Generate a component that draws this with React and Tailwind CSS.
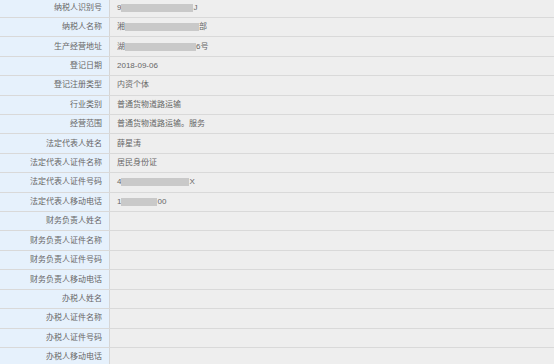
import React from 'react'

// masked value: leading text, grey block, trailing text
const Masked = ({ head, width, tail }) => (
  <span className="flex items-center">
    <span>{head}</span>
    <span className="inline-block h-[8px] bg-[#c9c9c9]" style={{ width }} />
    <span>{tail}</span>
  </span>
)

const rows = [
  { label: '纳税人识别号', value: <Masked head="9" width={72} tail="J" /> },
  { label: '纳税人名称', value: <Masked head="湘" width={74} tail="部" /> },
  { label: '生产经营地址', value: <Masked head="湖" width={71} tail="6号" /> },
  { label: '登记日期', value: '2018-09-06' },
  { label: '登记注册类型', value: '内资个体' },
  { label: '行业类别', value: '普通货物道路运输' },
  { label: '经营范围', value: '普通货物道路运输。服务' },
  { label: '法定代表人姓名', value: '薛星涛' },
  { label: '法定代表人证件名称', value: '居民身份证' },
  { label: '法定代表人证件号码', value: <Masked head="4" width={68} tail="X" /> },
  { label: '法定代表人移动电话', value: <Masked head="1" width={36} tail="00" /> },
  { label: '财务负责人姓名', value: '' },
  { label: '财务负责人证件名称', value: '' },
  { label: '财务负责人证件号码', value: '' },
  { label: '财务负责人移动电话', value: '' },
  { label: '办税人姓名', value: '' },
  { label: '办税人证件名称', value: '' },
  { label: '办税人证件号码', value: '' },
  { label: '办税人移动电话', value: '' },
]

const App = () => {
  return (
    <div className="w-[554px] h-[364px] overflow-hidden bg-[#eeeeee]">
      <div
        className="flex flex-col mt-[-1.4px] text-[8px] text-[#666]"
        style={{ fontFamily: '"Liberation Sans", "Noto Sans CJK SC", sans-serif' }}
      >
        {rows.map((row) => (
          <div key={row.label} className="flex h-[19.41px] shrink-0 border-b border-[#d9d9d9]">
            <div className="w-[110px] shrink-0 flex items-center justify-end pr-[7px] bg-[#e6f1fc] border-r border-[#d6d6d6]">
              {row.label}
            </div>
            <div className="flex-1 flex items-center pl-[7px]">{row.value}</div>
          </div>
        ))}
      </div>
    </div>
  )
}

export default App
